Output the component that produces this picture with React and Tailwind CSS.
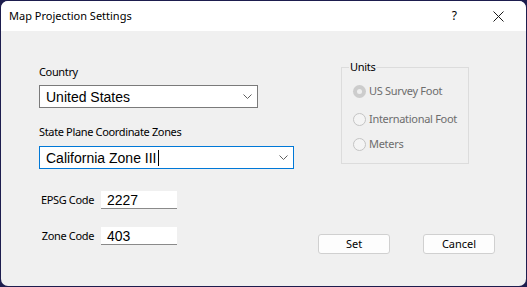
import React from 'react';

const ui = { fontFamily: '"Noto Sans", "Open Sans", sans-serif' };
const field = { fontFamily: '"Liberation Sans", Arial, sans-serif' };

const Chevron = () => (
  <svg width="9" height="5" viewBox="0 0 9 5" className="shrink-0">
    <path d="M0.5 0.5 L4.5 4.5 L8.5 0.5" fill="none" stroke="#606060" strokeWidth="1" />
  </svg>
);

const Radio = ({ label, checked, className = '' }) => (
  <div className={`flex items-center h-[16px] whitespace-nowrap ${className}`}>
    {checked ? (
      <span className="w-[13px] h-[13px] rounded-full bg-[#cccccc] flex items-center justify-center">
        <span className="w-[5px] h-[5px] rounded-full bg-[#eeeeee]" />
      </span>
    ) : (
      <span className="w-[13px] h-[13px] rounded-full border border-[#c4c4c4] bg-[#f4f4f4]" />
    )}
    <span className="ml-[3px] text-[11px] leading-[16px] tracking-[-0.3px] text-[#6d6d6d]">{label}</span>
  </div>
);

const CodeRow = ({ label, value, className }) => (
  <div className={`flex items-center ${className}`}>
    <span className="w-[55px] text-right text-[11px] leading-[16px] tracking-[-0.35px] text-black whitespace-nowrap">{label}</span>
    <div
      className="ml-[7px] w-[76px] h-[18px] bg-white border-b border-[#8a8a8a] pl-[6px] text-[14px] leading-[18px] text-black"
      style={field}
    >
      {value}
    </div>
  </div>
);

const DialogButton = ({ children }) => (
  <button className="w-[72px] h-[20px] rounded-[3px] border border-[#d0d0d0] bg-[#fdfdfd] text-[11px] leading-[16px] text-black">
    {children}
  </button>
);

export default function App() {
  return (
    <div className="w-[527px] h-[287px] bg-[#1d1d4e] p-[1px]" style={ui}>
      <div className="w-full h-full rounded-[7px] overflow-hidden bg-[#f0f0f0] flex flex-col">
        {/* Title bar */}
        <div className="h-[30px] bg-white flex items-center shrink-0">
          <span className="ml-[8px] text-[11px] leading-[16px] text-black">Map Projection Settings</span>
          <span className="ml-auto text-[12px] leading-[16px] text-black">?</span>
          <svg width="11" height="11" viewBox="0 0 11 11" className="ml-[36px] mr-[22px]">
            <path d="M0.5 0.5 L10.5 10.5 M10.5 0.5 L0.5 10.5" stroke="#1a1a1a" strokeWidth="1" />
          </svg>
        </div>

        {/* Body */}
        <div className="flex flex-1 pl-[38px]">
          {/* Left column */}
          <div className="w-[255px] flex flex-col pt-[33px]">
            <span className="text-[11px] leading-[16px] tracking-[-0.35px] text-black whitespace-nowrap">Country</span>
            <div className="mt-[5px] w-[219px] h-[23px] bg-white border border-[#7a7a7a] flex items-center pl-[6px] pr-[5px]">
              <span className="text-[14px] leading-[18px] text-black flex-1" style={field}>United States</span>
              <Chevron />
            </div>
            <span className="mt-[16px] text-[11px] leading-[16px] tracking-[-0.35px] text-black whitespace-nowrap">State Plane Coordinate Zones</span>
            <div className="mt-[6px] w-[255px] h-[23px] bg-white border border-[#0078d7] flex items-center pl-[6px] pr-[5px]">
              <span className="text-[14px] leading-[18px] text-black" style={field}>California Zone III</span>
              <span className="ml-[1px] w-[1px] h-[16px] bg-black" />
              <span className="flex-1" />
              <Chevron />
            </div>
            <CodeRow label="EPSG Code" value="2227" className="mt-[22px]" />
            <CodeRow label="Zone Code" value="403" className="mt-[18px]" />
          </div>

          {/* Right column */}
          <div className="flex flex-col pt-[36px]">
            <div className="relative ml-[47px] w-[128px] h-[97px] border border-[#dcdcdc] flex flex-col pl-[11px] pt-[15px]">
              <span className="absolute -top-[9px] left-[7px] px-[1px] bg-[#f0f0f0] text-[11px] leading-[16px] tracking-[-0.3px] text-black">
                Units
              </span>
              <Radio label="US Survey Foot" checked />
              <Radio label="International Foot" className="mt-[12px]" />
              <Radio label="Meters" className="mt-[9px]" />
            </div>
            <div className="mt-[70px] ml-[24px] flex gap-[33px]">
              <DialogButton>Set</DialogButton>
              <DialogButton>Cancel</DialogButton>
            </div>
          </div>
        </div>
      </div>
    </div>
  );
}
